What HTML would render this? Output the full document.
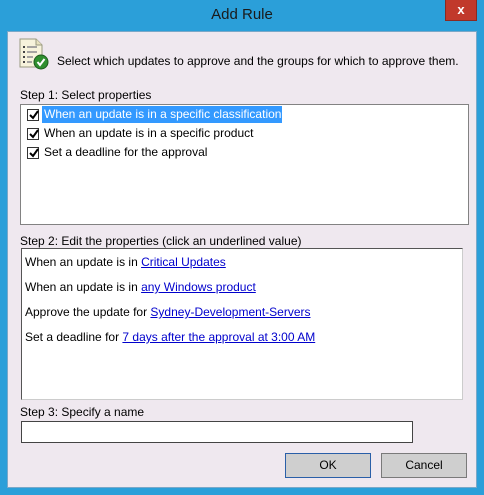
<!DOCTYPE html>
<html><head><style>
*{margin:0;padding:0;box-sizing:border-box}
body{width:484px;height:495px;background:#2b9fd9;position:relative;overflow:hidden;font-family:"Liberation Sans",sans-serif;font-size:12px;color:#000}
.a{position:absolute;white-space:nowrap}
#title{left:0;width:484px;top:6px;text-align:center;font-size:15px;color:#1a1a1a}
#close{left:445px;top:0;width:32px;height:21px;background:#c1392b;border:1px solid #8a2a22;border-top:none;color:#fff;font-weight:bold;font-size:13px;text-align:center;line-height:19px}
#client{left:7px;top:31px;width:470px;height:457px;background:#efe8ef;border:1px solid #7aa8c8}
.box{background:#fff;border:1px solid #828282}
.cb{width:12px;height:12px;border:1px solid #333;background:#fff}
.cb svg{position:absolute;left:0;top:0}
a{color:#0000cc;text-decoration:underline}
.btn{background:#cfcfcf;border:1px solid #7a7a7a;text-align:center;line-height:22px}
</style></head><body>
<div class="a" id="title">Add Rule</div>
<div class="a" id="close">x</div>
<div class="a" id="client"></div>
<svg class="a" style="left:17px;top:37px" width="34" height="34" viewBox="0 0 34 34">
<path d="M3 2h16l6 6v22H3z" fill="#f7f3dc" stroke="#9a9a80"/>
<path d="M19 2v6h6" fill="#e8e2c0" stroke="#9a9a80"/>
<g fill="#444"><rect x="6" y="9" width="2" height="2"/><rect x="6" y="14" width="2" height="2"/><rect x="6" y="19" width="2" height="2"/><rect x="6" y="24" width="2" height="2"/></g>
<g stroke="#556" stroke-width="1"><path d="M10 10h10M10 15h10M10 20h6M10 25h5"/></g>
<circle cx="24" cy="25" r="7" fill="#2f8f2f" stroke="#1c5c1c"/>
<path d="M20.5 25l2.5 3 4.5-6" stroke="#fff" stroke-width="2" fill="none"/>
</svg>
<div class="a" style="left:57px;top:54px">Select which updates to approve and the groups for which to approve them.</div>
<div class="a" style="left:20px;top:88px">Step 1: Select properties</div>
<div class="a box" style="left:20px;top:104px;width:449px;height:121px"></div>
<div class="a" style="left:42px;top:106px;width:240px;height:17px;background:#3399ff"></div>
<div class="a" style="left:44px;top:107px;color:#fff">When an update is in a specific classification</div>
<div class="a" style="left:44px;top:126px">When an update is in a specific product</div>
<div class="a" style="left:44px;top:145px">Set a deadline for the approval</div>
<div class="a cb" style="left:27px;top:109px"><svg width="11" height="11"><path d="M2 5l3 3 5-7" stroke="#000" stroke-width="2" fill="none"/></svg></div>
<div class="a cb" style="left:27px;top:128px"><svg width="11" height="11"><path d="M2 5l3 3 5-7" stroke="#000" stroke-width="2" fill="none"/></svg></div>
<div class="a cb" style="left:27px;top:147px"><svg width="11" height="11"><path d="M2 5l3 3 5-7" stroke="#000" stroke-width="2" fill="none"/></svg></div>
<div class="a" style="left:20px;top:234px">Step 2: Edit the properties (click an underlined value)</div>
<div class="a box" style="left:21px;top:248px;width:442px;height:152px;border-color:#555 #ccc #ccc #555"></div>
<div class="a" style="left:25px;top:255px">When an update is in <a>Critical Updates</a></div>
<div class="a" style="left:25px;top:280px">When an update is in <a>any Windows product</a></div>
<div class="a" style="left:25px;top:305px">Approve the update for <a>Sydney-Development-Servers</a></div>
<div class="a" style="left:25px;top:330px">Set a deadline for <a>7 days after the approval at 3:00 AM</a></div>
<div class="a" style="left:20px;top:405px">Step 3: Specify a name</div>
<div class="a box" style="left:21px;top:421px;width:392px;height:22px;border-color:#444"></div>
<div class="a btn" style="left:285px;top:453px;width:86px;height:25px;border-color:#2a5fa8">OK</div>
<div class="a btn" style="left:381px;top:453px;width:86px;height:25px">Cancel</div>
</body></html>
